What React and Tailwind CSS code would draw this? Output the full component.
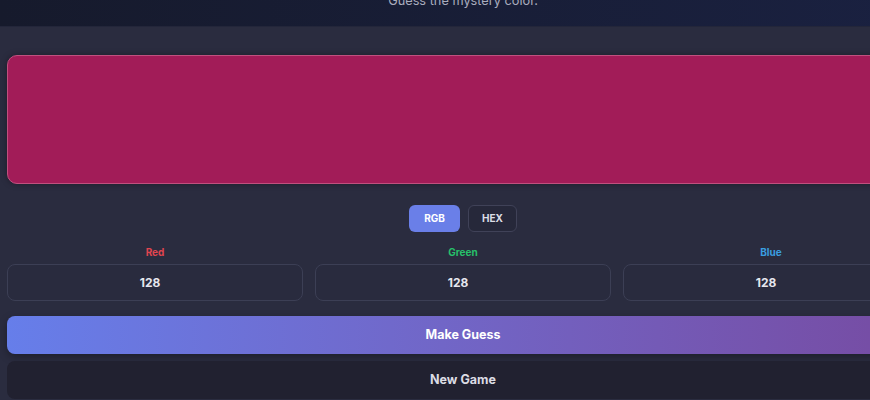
import React from "react";

export default function App() {
  return (
    <div className="w-[870px] h-[400px] overflow-hidden bg-[#2a2c3f]" style={{ fontFamily: "Inter, 'Noto Sans', sans-serif" }}>
      <div className="w-[926px]">
        <div className="h-[27px] bg-gradient-to-r from-[#161a2c] to-[#1a2141] flex justify-center border-b border-[#23263a]">
          <div className="-mt-[8px] text-[12.75px] leading-[18px] text-[#a9acbd]">Guess the mystery color.</div>
        </div>
        <div className="px-[7px] pt-[28px]">
          <div className="h-[129px] rounded-[10px] bg-[#a21c58] border border-[#c0507f] shadow-[0_0_6px_rgba(0,0,0,0.35)]"></div>
          <div className="flex justify-center gap-[8px] mt-[21px]">
            <button className="w-[51px] h-[27px] rounded-[6px] bg-[#6a7fe8] text-white text-[10px] font-bold">RGB</button>
            <button className="w-[49px] h-[27px] rounded-[6px] border border-[#404258] bg-[#26283a] text-[#dcdde6] text-[10px] font-bold">HEX</button>
          </div>
          <div className="grid grid-cols-3 gap-[12px] mt-[13px]">
            {[
              ["Red", "text-[#e0454f]"],
              ["Green", "text-[#27c06a]"],
              ["Blue", "text-[#3a9ee0]"],
            ].map(([label, cls]) => (
              <div key={label} className="flex flex-col items-center">
                <div className={`text-[10px] font-bold leading-[14px] ${cls}`}>{label}</div>
                <div className="mt-[5px] w-full h-[37px] rounded-[8px] border border-[#3c3f55] bg-[#292b3e] flex items-center justify-center pr-[10px] text-[12px] font-bold text-[#e6e7ee]">128</div>
              </div>
            ))}
          </div>
          <button className="mt-[15px] w-full h-[38px] rounded-[8px] bg-gradient-to-r from-[#667eea] to-[#764ba2] text-white text-[12.5px] font-bold shadow-[0_3px_8px_rgba(0,0,0,0.3)]">Make Guess</button>
          <button className="mt-[7px] w-full h-[38px] rounded-[8px] bg-[#212130] text-[#dcdce4] text-[12.5px] font-bold">New Game</button>
        </div>
      </div>
    </div>
  );
}
